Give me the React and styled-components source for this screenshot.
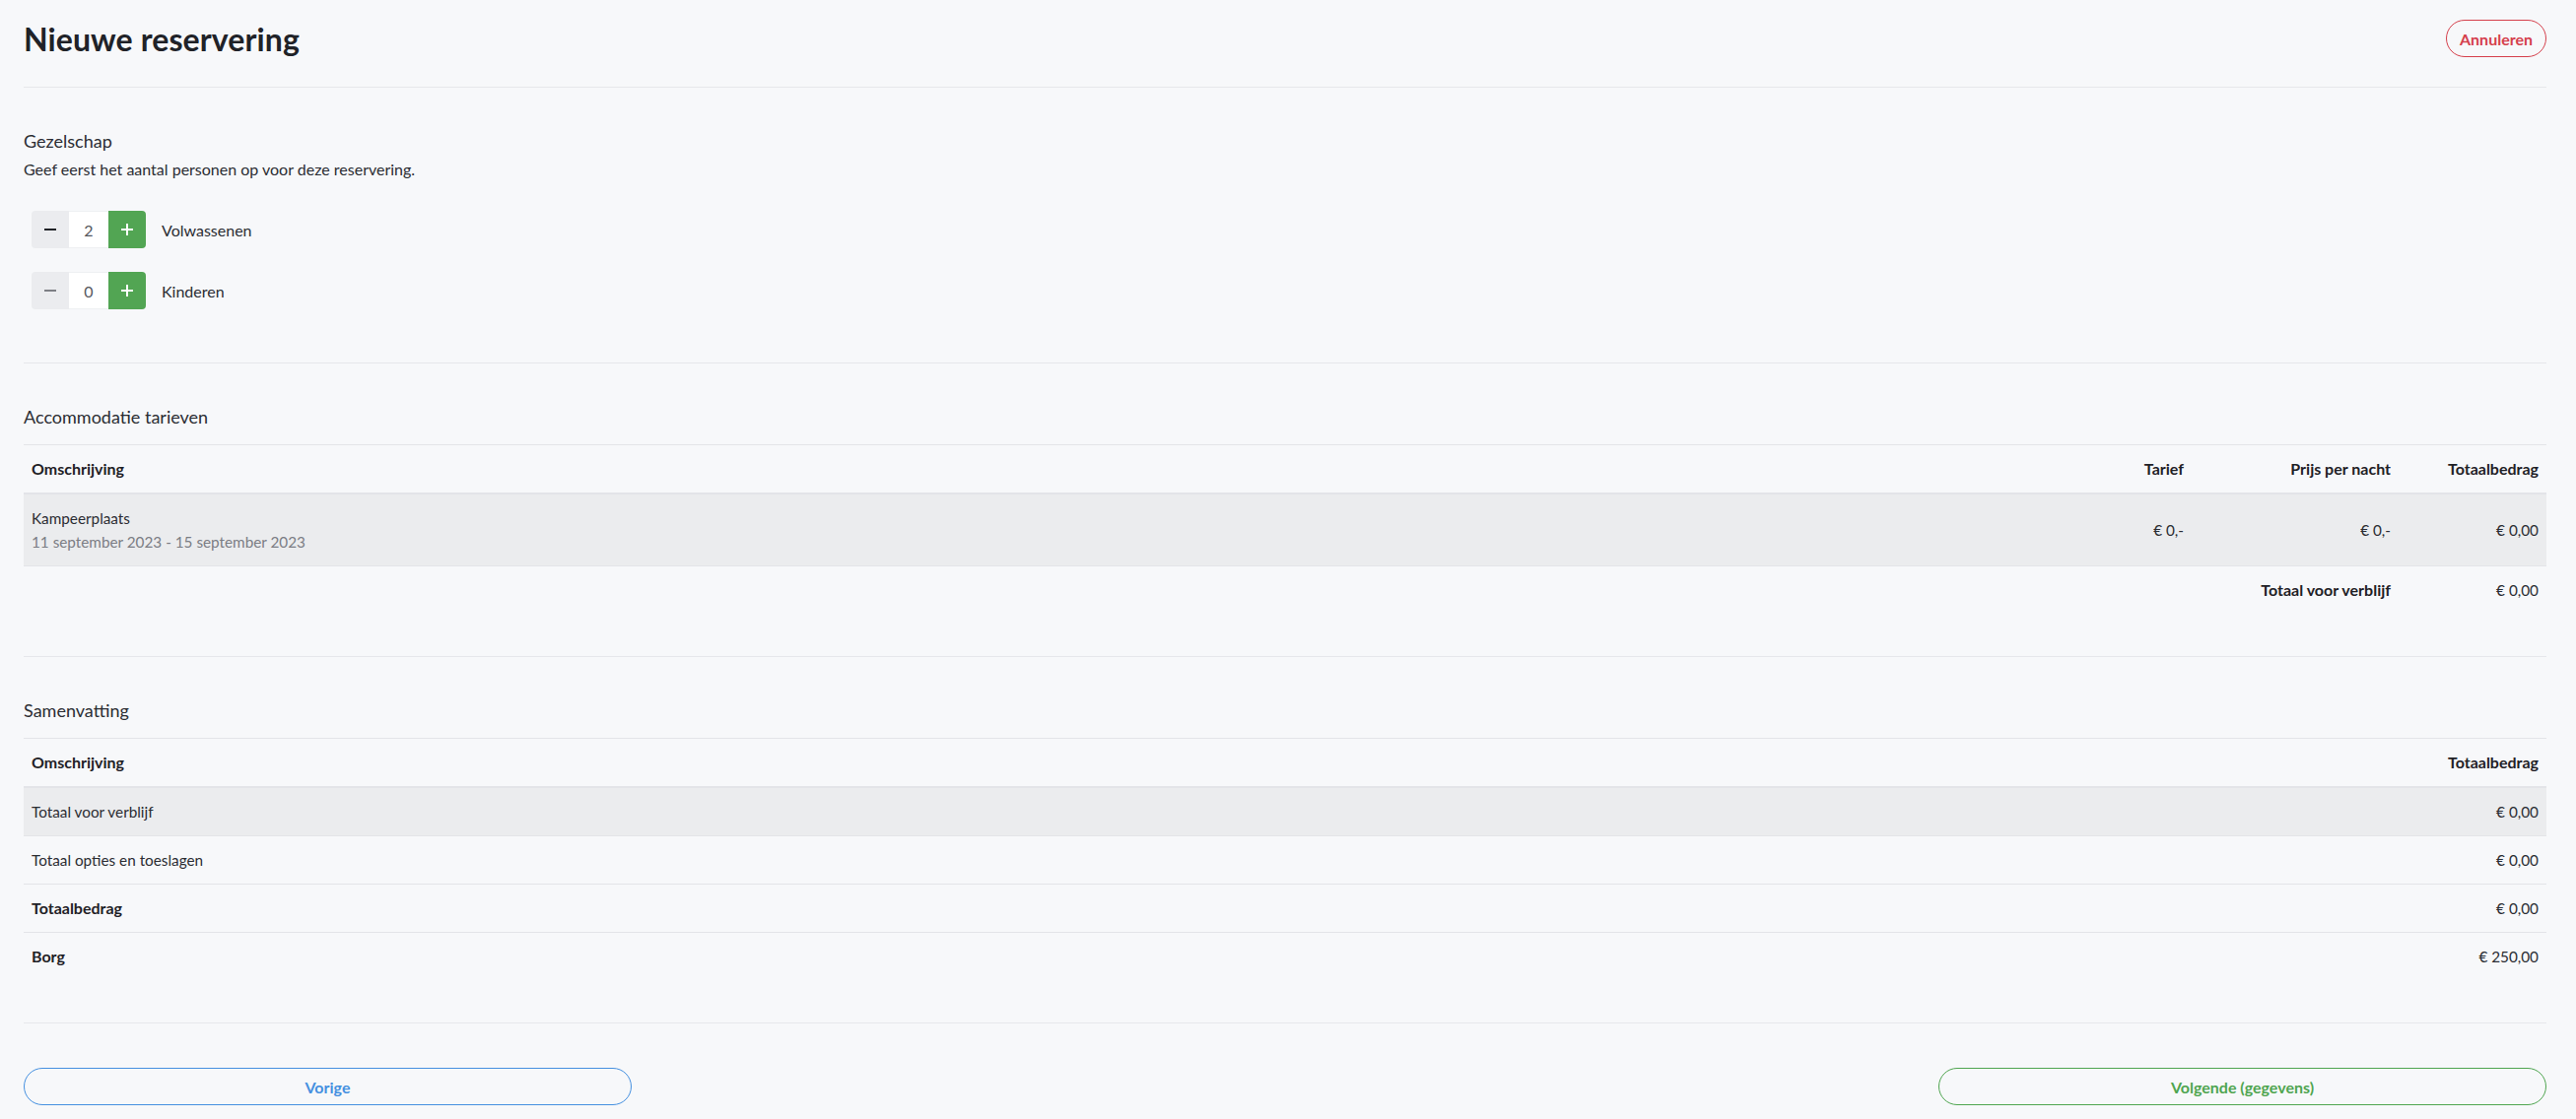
import styled, { createGlobalStyle } from "styled-components";
import { useState } from "react";

const GlobalStyle = createGlobalStyle`
  html, body {
    margin: 0;
    padding: 0;
    background: #f7f8fa;
    font-family: Lato, "Open Sans", Arial, sans-serif;
    color: #2b2d33;
  }
`;

const Page = styled.div`
  padding: 20px 30px 14px 24px;
`;

const Header = styled.header`
  display: flex;
  align-items: center;
  justify-content: space-between;
  height: 38px;
  padding-bottom: 30px;
  border-bottom: 1px solid #e6e7eb;
`;

const Title = styled.h1`
  margin: 0;
  font-size: 32px;
  font-weight: 700;
  color: #202228;
  letter-spacing: 0.1px;
`;

const PillButton = styled.button`
  height: 38px;
  width: ${(p) => p.$width || "auto"};
  padding: 0 12px;
  border-radius: 19px;
  border: 1px solid ${(p) => p.$color};
  color: ${(p) => p.$color};
  background: transparent;
  font-family: inherit;
  font-size: 16px;
  font-weight: 700;
  cursor: pointer;
`;

const Section = styled.section`
  padding: 40px 0 ${(p) => p.$bottom || 43}px;
  border-bottom: 1px solid #e6e7eb;
`;

const SectionTitle = styled.h2`
  margin: 0 0 ${(p) => p.$gap || 14}px;
  font-size: 18px;
  line-height: 28px;
  font-weight: 400;
  color: #2b2d33;
`;

const Intro = styled.p`
  margin: 0 0 31px;
  font-size: 16px;
  line-height: 22px;
`;

const StepperList = styled.div`
  display: flex;
  flex-direction: column;
  gap: 24px;
  padding-left: 8px;
`;

const StepperRow = styled.div`
  display: flex;
  align-items: center;
  gap: 16px;
`;

const Stepper = styled.div`
  display: flex;
  height: 38px;
`;

const StepButton = styled.button`
  width: 38px;
  height: 38px;
  border: none;
  padding: 0;
  display: flex;
  align-items: center;
  justify-content: center;
  cursor: pointer;
  background: ${(p) => (p.$plus ? "#52a553" : "#ebecef")};
  color: ${(p) => (p.$plus ? "#ffffff" : p.$disabled ? "#7d7f85" : "#1f2126")};
  border-radius: ${(p) => (p.$plus ? "0 4px 4px 0" : "4px 0 0 4px")};
`;

const Value = styled.div`
  width: 40px;
  height: 36px;
  background: #ffffff;
  border-top: 1px solid #eef0f2;
  border-bottom: 1px solid #eef0f2;
  display: flex;
  align-items: center;
  justify-content: center;
  font-size: 16px;
  color: #55575d;
`;

const StepLabel = styled.span`
  font-size: 16px;
  color: #2b2d33;
`;

const Table = styled.div`
  border-top: 1px solid #e3e4e8;
`;

const Row = styled.div`
  display: grid;
  grid-template-columns: ${(p) => p.$cols};
  align-items: center;
  min-height: 48px;
  padding: 0 8px;
  background: ${(p) => (p.$shade ? "#ebecee" : "transparent")};
  border-bottom: ${(p) => (p.$line ? `${p.$line}px solid #e3e4e8` : "none")};
  font-size: 15.3px;
  line-height: 24px;
`;

const Cell = styled.div`
  padding: 12px 0;
  text-align: ${(p) => (p.$right ? "right" : "left")};
  font-weight: ${(p) => (p.$bold ? 700 : 400)};
  font-size: ${(p) => (p.$bold ? "16px" : "inherit")};
  color: ${(p) => (p.$bold ? "#1f2126" : "#2b2d33")};
`;

const Sub = styled.div`
  color: #7b7d84;
`;

const Footer = styled.div`
  display: flex;
  justify-content: space-between;
  padding-top: 45px;
`;

const MinusIcon = () => (
  <svg width="12" height="12" viewBox="0 0 12 12">
    <rect x="0" y="5" width="12" height="2" fill="currentColor" />
  </svg>
);

const PlusIcon = () => (
  <svg width="12" height="12" viewBox="0 0 12 12">
    <rect x="0" y="5" width="12" height="2" fill="currentColor" />
    <rect x="5" y="0" width="2" height="12" fill="currentColor" />
  </svg>
);

const accCols = "1fr 200px 210px 150px";
const sumCols = "1fr 200px";

const summary = [
  { label: "Totaal voor verblijf", amount: "€ 0,00", shade: true },
  { label: "Totaal opties en toeslagen", amount: "€ 0,00" },
  { label: "Totaalbedrag", amount: "€ 0,00", bold: true },
  { label: "Borg", amount: "€ 250,00", bold: true, last: true },
];

const App = () => {
  const [party, setParty] = useState({ adults: 2, children: 0 });

  const change = (key, delta) => {
    setParty({ ...party, [key]: Math.max(0, party[key] + delta) });
  };

  const groups = [
    { key: "adults", label: "Volwassenen" },
    { key: "children", label: "Kinderen" },
  ];

  return (
    <Page>
      <GlobalStyle />
      <Header>
        <Title>Nieuwe reservering</Title>
        <PillButton $color="#d5404c" $width="102px">Annuleren</PillButton>
      </Header>

      <Section $bottom={54}>
        <SectionTitle $gap={4}>Gezelschap</SectionTitle>
        <Intro>Geef eerst het aantal personen op voor deze reservering.</Intro>
        <StepperList>
          {groups.map((g) => (
            <StepperRow key={g.key}>
              <Stepper>
                <StepButton $disabled={party[g.key] === 0} onClick={() => change(g.key, -1)}>
                  <MinusIcon />
                </StepButton>
                <Value>{party[g.key]}</Value>
                <StepButton $plus onClick={() => change(g.key, 1)}>
                  <PlusIcon />
                </StepButton>
              </Stepper>
              <StepLabel>{g.label}</StepLabel>
            </StepperRow>
          ))}
        </StepperList>
      </Section>

      <Section>
        <SectionTitle>Accommodatie tarieven</SectionTitle>
        <Table>
          <Row $cols={accCols} $line={2}>
            <Cell $bold>Omschrijving</Cell>
            <Cell $bold $right>Tarief</Cell>
            <Cell $bold $right>Prijs per nacht</Cell>
            <Cell $bold $right>Totaalbedrag</Cell>
          </Row>
          <Row $cols={accCols} $shade $line={1}>
            <Cell>
              Kampeerplaats
              <Sub>11 september 2023 - 15 september 2023</Sub>
            </Cell>
            <Cell $right>€ 0,-</Cell>
            <Cell $right>€ 0,-</Cell>
            <Cell $right>€ 0,00</Cell>
          </Row>
          <Row $cols={accCols}>
            <Cell />
            <Cell />
            <Cell $bold $right>Totaal voor verblijf</Cell>
            <Cell $right>€ 0,00</Cell>
          </Row>
        </Table>
      </Section>

      <Section>
        <SectionTitle>Samenvatting</SectionTitle>
        <Table>
          <Row $cols={sumCols} $line={2}>
            <Cell $bold>Omschrijving</Cell>
            <Cell $bold $right>Totaalbedrag</Cell>
          </Row>
          {summary.map((s) => (
            <Row key={s.label} $cols={sumCols} $shade={s.shade} $line={s.last ? 0 : 1}>
              <Cell $bold={s.bold}>{s.label}</Cell>
              <Cell $right>{s.amount}</Cell>
            </Row>
          ))}
        </Table>
      </Section>

      <Footer>
        <PillButton $color="#4590e0" $width="617px">Vorige</PillButton>
        <PillButton $color="#4fa550" $width="617px">Volgende (gegevens)</PillButton>
      </Footer>
    </Page>
  );
};

export default App;
